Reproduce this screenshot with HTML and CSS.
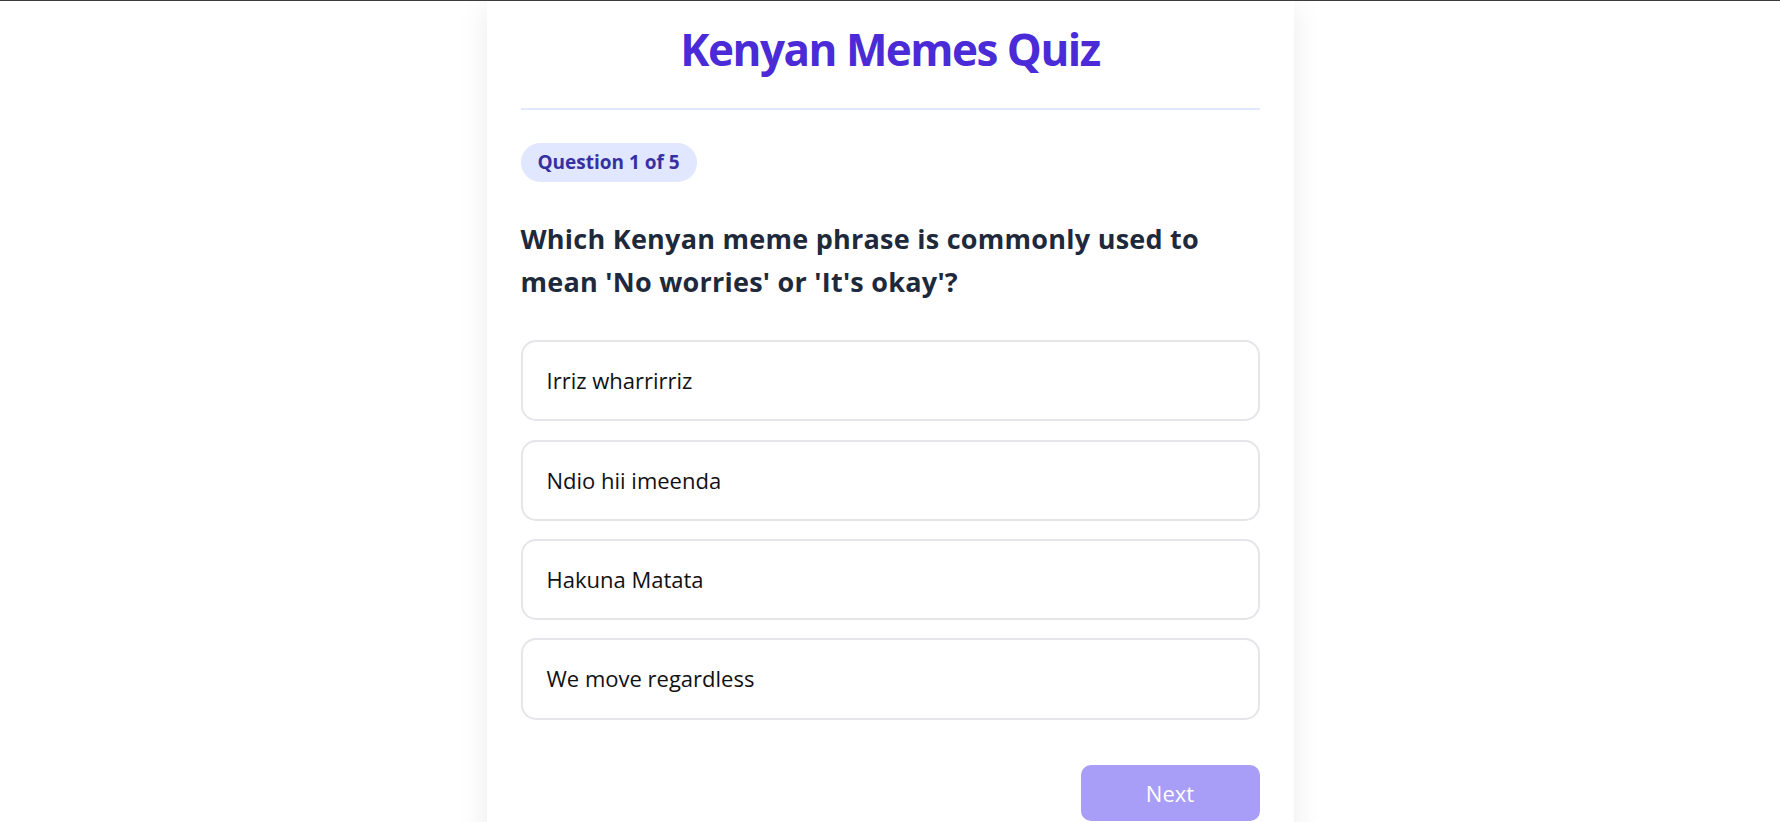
FILE: index.html
```html
<!DOCTYPE html>
<html lang="en">
<head>
<meta charset="utf-8">
<title>Kenyan Memes Quiz</title>
<link rel="stylesheet" href="styles.css">
</head>
<body>
<main class="quiz-card">
  <header class="quiz-header">
    <h1 class="quiz-title">Kenyan Memes Quiz</h1>
  </header>
  <div class="question-badge">Question 1 of 5</div>
  <h2 class="question-text">Which Kenyan meme phrase is commonly used to mean 'No worries' or 'It's okay'?</h2>
  <div class="options">
    <button class="option">Irriz wharrirriz</button>
    <button class="option">Ndio hii imeenda</button>
    <button class="option">Hakuna Matata</button>
    <button class="option">We move regardless</button>
  </div>
  <div class="actions">
    <button class="next-btn" disabled>Next</button>
  </div>
</main>
</body>
</html>
```
FILE: styles.css
```css
* { box-sizing: border-box; }

html, body {
  margin: 0;
  padding: 0;
  background: #ffffff;
  height: 100%;
  overflow: hidden;
}

body {
  border-top: 1px solid #3c3c3c;
  font-family: "Open Sans", "Noto Sans", sans-serif;
}

.quiz-card {
  width: 807px;
  margin: 0 auto;
  background: #ffffff;
  padding: 22px 34px 40px;
  box-shadow: 0 4px 30px rgba(0, 0, 0, 0.08);
  min-height: 900px;
}

.quiz-header {
  padding-bottom: 32px;
  border-bottom: 2px solid #e0e7ff;
}

.quiz-title {
  margin: 0;
  text-align: center;
  font-size: 44px;
  line-height: 1.2;
  font-weight: 700;
  letter-spacing: -1.5px;
  color: #4a2bd7;
}

.question-badge {
  display: inline-block;
  margin-top: 33px;
  padding: 6px 17px;
  line-height: 27px;
  font-size: 19px;
  font-weight: 700;
  color: #3730a3;
  background: #e0e7ff;
  border-radius: 999px;
}

.question-text {
  margin: 35px 0 0;
  font-size: 27px;
  line-height: 43.2px;
  font-weight: 700;
  letter-spacing: 0.25px;
  color: #1e293b;
}

.options {
  margin-top: 37px;
  display: flex;
  flex-direction: column;
  gap: 18.2px;
}

.option {
  display: block;
  width: 100%;
  text-align: left;
  font-family: inherit;
  font-size: 22px;
  line-height: 35.2px;
  color: #111111;
  background: #ffffff;
  border: 2px solid #e5e5ea;
  border-radius: 15px;
  padding: 21px 24px;
  cursor: pointer;
}

.actions {
  margin-top: 45px;
  display: flex;
  justify-content: flex-end;
}

.next-btn {
  width: 179px;
  height: 56px;
  font-family: inherit;
  font-size: 22px;
  line-height: 56px;
  padding: 0;
  color: #ffffff;
  background: #a89ef7;
  border: none;
  border-radius: 10px;
}
```
